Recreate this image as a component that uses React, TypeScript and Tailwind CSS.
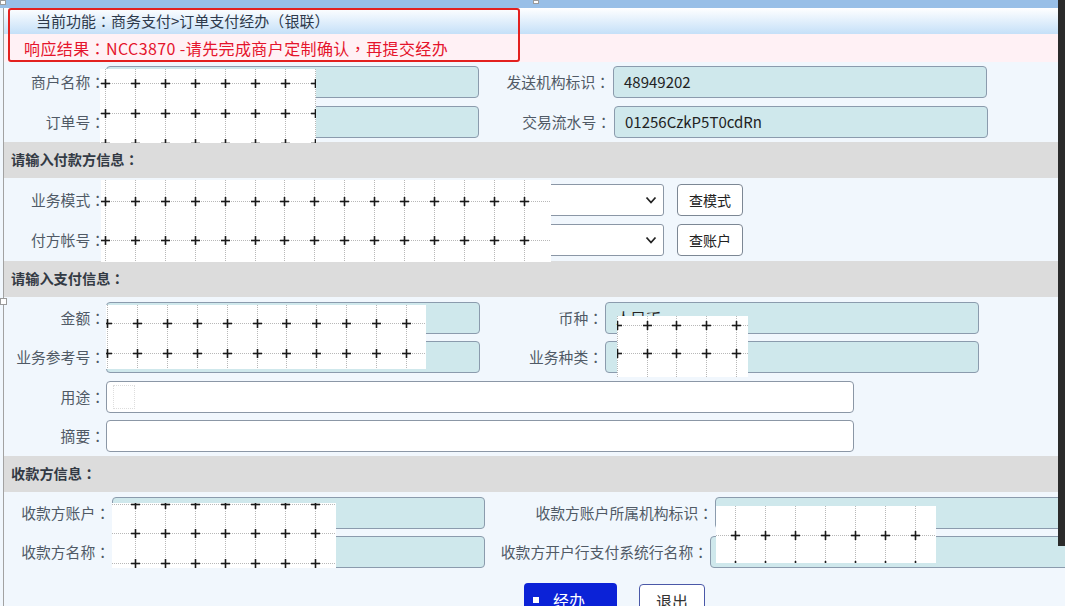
import React from "react";

const PUNCT = /([：，（）])/;

function T({ children }: { children: string }) {
  const parts = children.split(PUNCT);
  return (
    <>
      {parts.map((p, i) =>
        PUNCT.test(p) ? (
          <span key={i} className="font-['Noto_Sans_CJK_TC',sans-serif]">
            {p}
          </span>
        ) : (
          <React.Fragment key={i}>{p}</React.Fragment>
        )
      )}
    </>
  );
}

type RedactProps = { x: number; y: number; w: number; h: number; xs: number[]; ys: number[] };

function Redact({ x, y, w, h, xs, ys }: RedactProps) {
  return (
    <div className="absolute" style={{ left: x, top: y, width: w, height: h }}>
      <svg width={w} height={h} className="block">
        <rect x={0} y={0} width={w} height={h} fill="#ffffff" />
        {xs.map((cx, i) => (
          <line key={"v" + i} x1={cx - x + 0.5} y1={0} x2={cx - x + 0.5} y2={h} stroke="#b8b8b8" strokeWidth={1} strokeDasharray="1 1" />
        ))}
        {ys.map((cy, i) => (
          <line key={"h" + i} x1={0} y1={cy - y + 0.5} x2={w} y2={cy - y + 0.5} stroke="#b8b8b8" strokeWidth={1} strokeDasharray="1 1" />
        ))}
        {xs.map((cx, i) =>
          ys.map((cy, j) => (
            <g key={"c" + i + "-" + j} stroke="#1a1a1a" strokeWidth={1.6}>
              <line x1={cx - x - 4} y1={cy - y + 0.5} x2={cx - x + 5} y2={cy - y + 0.5} />
              <line x1={cx - x + 0.5} y1={cy - y - 4} x2={cx - x + 0.5} y2={cy - y + 5} />
            </g>
          ))
        )}
      </svg>
    </div>
  );
}

function seq(start: number, step: number, n: number) {
  return Array.from({ length: n }, (_, i) => Math.round(start + step * i));
}

function Label({ w, children }: { w: number; children: string }) {
  return (
    <div className="shrink-0 text-right text-[14.8px] text-[#505a66] whitespace-nowrap" style={{ width: w }}>
      <T>{children}</T>
    </div>
  );
}

function TealInput({ w, value, ml }: { w: number; value?: string; ml: number }) {
  return (
    <div
      className="shrink-0 h-[32px] rounded-[4px] border border-[#8b9bad] bg-[#cfe8ec] px-[10px] flex items-center text-[15px] text-[#222]"
      style={{ width: w, marginLeft: ml }}
    >
      {value}
    </div>
  );
}

function WhiteInput({ w, ml, children }: { w: number; ml: number; children?: React.ReactNode }) {
  return (
    <div
      className="shrink-0 h-[32px] rounded-[4px] border border-[#8b97a6] bg-white flex items-center"
      style={{ width: w, marginLeft: ml }}
    >
      {children}
    </div>
  );
}

function Select({ w, ml }: { w: number; ml: number }) {
  return (
    <div
      className="shrink-0 h-[32px] rounded-[3px] border border-[#8b97a6] bg-white flex items-center justify-end pr-[6px]"
      style={{ width: w, marginLeft: ml }}
    >
      <svg width="12" height="10" viewBox="0 0 12 10">
        <path d="M1.5 2.5 L6 7.5 L10.5 2.5" fill="none" stroke="#222" strokeWidth="1.8" />
      </svg>
    </div>
  );
}

function SmallButton({ text, ml }: { text: string; ml: number }) {
  return (
    <div
      className="shrink-0 h-[32px] w-[66px] rounded-[4px] border border-[#7c8794] bg-white flex items-center justify-center text-[14px] text-[#222]"
      style={{ marginLeft: ml }}
    >
      {text}
    </div>
  );
}

function Section({ title }: { title: string }) {
  return (
    <div className="h-[36px] bg-[#dcdcdc] flex items-center pl-[7px] text-[14.2px] font-bold text-[#333a44]">
      <T>{title}</T>
    </div>
  );
}

export default function App() {
  return (
    <div className="relative w-[1065px] h-[606px] overflow-hidden bg-[#f1f7fd] font-['Noto_Sans_CJK_SC','Noto_Sans',sans-serif]">
      <div className="h-[8px] bg-[#98bfe7]" />
      <div className="ml-[3px] border-l border-[#a2a2a2] h-[598px] w-[1200px]">
        <div className="h-[26px] bg-gradient-to-b from-white to-[#c5e0f8] pl-[32px] flex items-center text-[15px] text-[#2e3a4c] w-[1054px]">
          <T>当前功能：商务支付&gt;订单支付经办（银联）</T>
        </div>
        <div className="h-[28px] bg-[#fff1f5] pl-[20px] flex items-center text-[16px] tracking-[0.4px] text-[#e5142c] w-[1054px]">
          <T>响应结果：NCC3870 -请先完成商户定制确认，再提交经办</T>
        </div>

        <div className="flex items-center h-[40px]">
          <Label w={101}>商户名称：</Label>
          <TealInput w={373} ml={1} />
          <Label w={131}>发送机构标识：</Label>
          <TealInput w={374} ml={3} value="48949202" />
        </div>
        <div className="flex items-center h-[40px]">
          <Label w={101}>订单号：</Label>
          <TealInput w={373} ml={1} />
          <Label w={132}>交易流水号：</Label>
          <TealInput w={374} ml={3} value="01256CzkP5T0cdRn" />
        </div>

        <div className="w-[1054px]">
          <Section title="请输入付款方信息：" />
        </div>
        <div className="pt-[2px] pb-[1px]">
          <div className="flex items-center h-[40px]">
            <Label w={101}>业务模式：</Label>
            <Select w={558} ml={1} />
            <SmallButton text="查模式" ml={13} />
          </div>
          <div className="flex items-center h-[40px]">
            <Label w={101}>付方帐号：</Label>
            <Select w={558} ml={1} />
            <SmallButton text="查账户" ml={13} />
          </div>
        </div>

        <div className="w-[1054px]">
          <Section title="请输入支付信息：" />
        </div>
        <div className="pt-[1px]">
          <div className="flex items-center h-[39.5px]">
            <Label w={101}>金额：</Label>
            <TealInput w={374} ml={1} />
            <Label w={123}>币种：</Label>
            <TealInput w={374} ml={2} value="人民币" />
          </div>
          <div className="flex items-center h-[39.5px]">
            <Label w={101}>业务参考号：</Label>
            <TealInput w={374} ml={1} />
            <Label w={123}>业务种类：</Label>
            <TealInput w={374} ml={2} />
          </div>
          <div className="flex items-center h-[39.5px]">
            <Label w={101}>用途：</Label>
            <WhiteInput w={748} ml={1}>
              <div className="ml-[6px] h-[24px] w-[22px] border border-dotted border-[#dddddd]" />
            </WhiteInput>
          </div>
          <div className="flex items-center h-[39.5px]">
            <Label w={101}>摘要：</Label>
            <WhiteInput w={748} ml={1} />
          </div>
        </div>

        <div className="w-[1054px]">
          <Section title="收款方信息：" />
        </div>
        <div className="pt-[1px]">
          <div className="flex items-center h-[39.5px]">
            <Label w={106}>收款方账户：</Label>
            <TealInput w={373} ml={2} />
            <Label w={228}>收款方账户所属机构标识：</Label>
            <TealInput w={400} ml={2} />
          </div>
          <div className="flex items-center h-[39.5px]">
            <Label w={106}>收款方名称：</Label>
            <TealInput w={373} ml={2} />
            <Label w={223}>收款方开户行支付系统行名称：</Label>
            <TealInput w={400} ml={2} />
          </div>
        </div>

        <div className="flex items-start pl-[520px] pt-[11px]">
          <div className="relative w-[93px] h-[34px] rounded-[4px] bg-[#0b22d7] flex items-center pl-[29px] text-[16px] text-white">
            <div className="absolute left-[9px] top-[14px] w-[6px] h-[6px] bg-white" />
            经办
          </div>
          <div className="ml-[22px] mt-[1px] w-[66px] h-[34px] rounded-[4px] border border-[#4a58a8] bg-white flex items-center justify-center text-[16px] text-[#333]">
            退出
          </div>
        </div>
      </div>

      <div className="absolute left-[8px] top-[8px] w-[512px] h-[54px] border-2 border-[#e3211f] rounded-[3px]" />

      <Redact x={100} y={69} w={216} h={74} xs={seq(105, 30, 8)} ys={[83, 113, 143]} />
      <Redact x={101} y={180} w={450} h={82} xs={seq(105, 29.9, 15)} ys={[201, 240, 267]} />
      <Redact x={106} y={305} w={320} h={64} xs={seq(107, 29.9, 11)} ys={[323, 353]} />
      <Redact x={617} y={316} w={131} h={61} xs={seq(617, 29.7, 5)} ys={[325, 353]} />
      <Redact x={112} y={503} w={224} h={65} xs={seq(135, 30, 7)} ys={[504, 533, 563]} />
      <Redact x={716} y={506} w={220} h={57} xs={seq(735, 30, 7)} ys={[535, 565]} />

      <div className="absolute right-0 top-0 w-[7px] h-[546px] bg-[#2b2b2b]" />
      <div className="absolute left-0 top-0 w-[6px] h-[5px] bg-white border border-[#9a9a9a]" />
      <div className="absolute left-[533px] top-0 w-[6px] h-[4px] bg-white border border-[#9a9a9a]" />
      <div className="absolute left-0 top-[298px] w-[7px] h-[7px] bg-white border border-[#9a9a9a]" />
    </div>
  );
}
